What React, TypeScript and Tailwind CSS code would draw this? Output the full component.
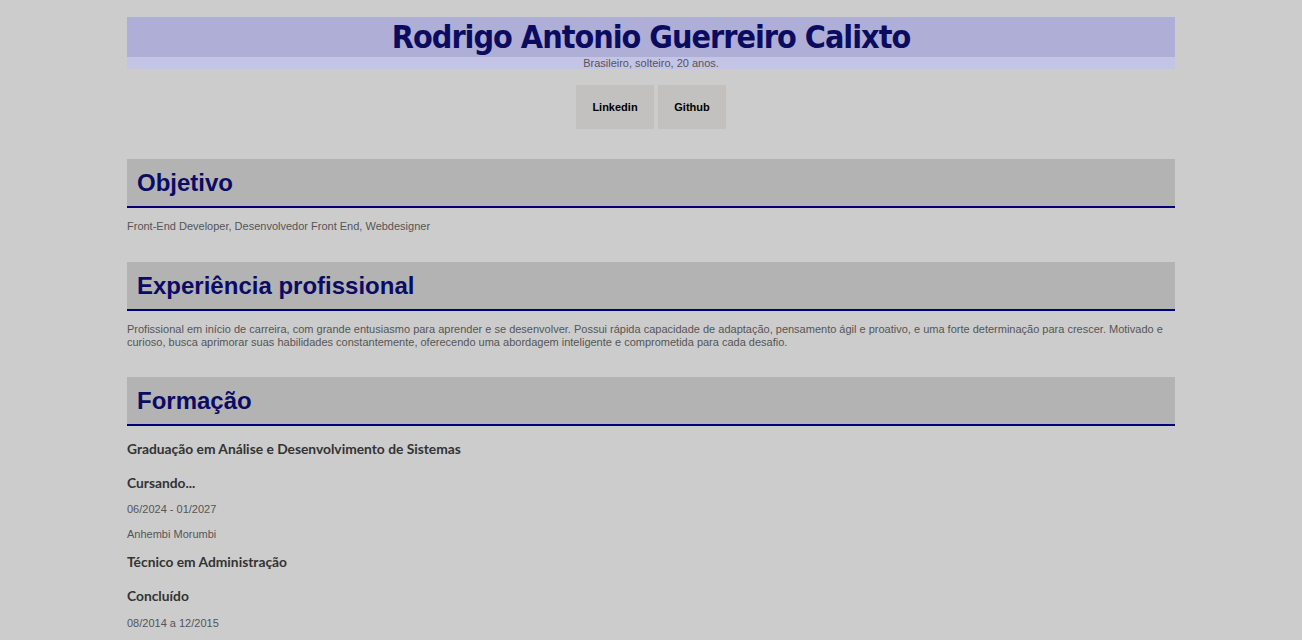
export default function App() {
  const arial = { fontFamily: '"Liberation Sans", Arial, sans-serif' };
  return (
    <div className="min-h-screen w-full bg-[#cccccc] pt-[17px]" style={arial}>
      <div className="mx-auto w-[1048px]">
        <div className="h-[40px] bg-[#aeaed6] flex items-center justify-center">
          <h1
            className="text-[32px] font-bold leading-none text-[#0b0b60] tracking-[-1px]"
            style={{ fontFamily: '"Liberation Sans Narrow", "DejaVu Sans Condensed", "Liberation Sans", sans-serif' }}
          >
            Rodrigo Antonio Guerreiro Calixto
          </h1>
        </div>
        <div className="h-[12px] bg-[#c4c4e6] text-center text-[11px] leading-[12px] text-[#555]">
          Brasileiro, solteiro, 20 anos.
        </div>
        <div className="mt-[16px] flex justify-center gap-[4px]">
          <a className="flex h-[44px] w-[78px] items-center justify-center bg-[#c2c1bf] text-[11px] font-bold text-black">Linkedin</a>
          <a className="flex h-[44px] w-[68px] items-center justify-center bg-[#c2c1bf] text-[11px] font-bold text-black">Github</a>
        </div>

        <Section title="Objetivo" mt="mt-[30px]">
          <p className="mt-[12px] text-[11px] leading-[13px] text-[#555]">
            Front-End Developer, Desenvolvedor Front End, Webdesigner
          </p>
        </Section>

        <Section title="Experiência profissional" mt="mt-[29px]">
          <p className="mt-[12px] text-[11px] leading-[13px] text-[#555]">
            Profissional em início de carreira, com grande entusiasmo para aprender e se desenvolver. Possui rápida capacidade de adaptação, pensamento ágil e proativo, e uma forte determinação para crescer. Motivado e curioso, busca aprimorar suas habilidades constantemente, oferecendo uma abordagem inteligente e comprometida para cada desafio.
          </p>
        </Section>

        <Section title="Formação" mt="mt-[28px]">
          <div className="flex flex-col">
            <Bold mt="mt-[13px]">Graduação em Análise e Desenvolvimento de Sistemas</Bold>
            <Bold mt="mt-[14px]">Cursando...</Bold>
            <Small mt="mt-[9px]">06/2024 - 01/2027</Small>
            <Small mt="mt-[11px]">Anhembi Morumbi</Small>
            <Bold mt="mt-[11px]">Técnico em Administração</Bold>
            <Bold mt="mt-[14px]">Concluído</Bold>
            <Small mt="mt-[10px]">08/2014 a 12/2015</Small>
          </div>
        </Section>
      </div>
    </div>
  );
}

function Section({ title, mt, children }: { title: string; mt: string; children: React.ReactNode }) {
  return (
    <div className={mt}>
      <div className="flex h-[49px] items-center border-b-2 border-[#00007a] bg-[#b3b3b3] pl-[10px]">
        <h2 className="text-[24px] font-bold leading-none text-[#0b0b66]">{title}</h2>
      </div>
      {children}
    </div>
  );
}

function Bold({ mt, children }: { mt: string; children: React.ReactNode }) {
  return (
    <div
      className={`${mt} h-[20px] text-[13.8px] font-bold leading-[20px] text-[#333]`}
      style={{ fontFamily: 'Lato, "Open Sans", sans-serif' }}
    >
      {children}
    </div>
  );
}

function Small({ mt, children }: { mt: string; children: React.ReactNode }) {
  return <div className={`${mt} h-[14px] text-[11px] leading-[14px] text-[#555]`}>{children}</div>;
}
